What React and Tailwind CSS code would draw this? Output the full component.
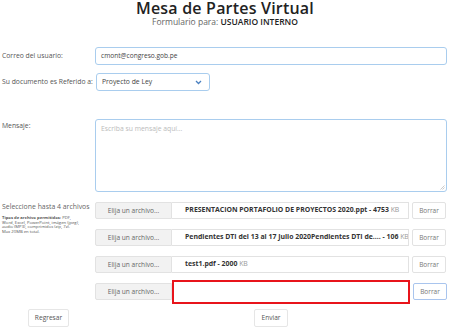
export default function App() {
  const archivos = [
    { nombre: "PRESENTACION PORTAFOLIO DE PROYECTOS 2020.ppt - 4753", kb: "KB" },
    { nombre: "Pendientes DTI del 13 al 17 Julio 2020Pendientes DTI de.... - 106", kb: "KB" },
    { nombre: "test1.pdf - 2000", kb: "KB" },
    { nombre: "", kb: "", vacio: true },
  ];

  return (
    <div
      className="w-[450px] h-[332px] bg-white text-[#555] relative overflow-hidden"
      style={{ fontFamily: "'Open Sans', 'Noto Sans', sans-serif" }}
    >
      {/* HEADER */}
      <div className="flex flex-col items-center">
        <h1 className="text-[16px] leading-[16px] tracking-[0.2px] font-semibold text-[#222]">Mesa de Partes Virtual</h1>
        <div className="text-[8.5px] leading-[11px] text-[#666]">
          Formulario para: <span className="font-semibold text-[#222]">USUARIO INTERNO</span>
        </div>
      </div>

      {/* CORREO */}
      <div className="flex items-center mt-[20px] h-[18px]">
        <div className="w-[95px] pl-[2px] text-[6.8px] text-[#555] whitespace-nowrap">Correo del usuario:</div>
        <div className="w-[352px] h-[18px] border border-[#a9cdee] rounded-[3px] flex items-center px-[5px] text-[6.6px] text-[#444]">
          cmont@congreso.gob.pe
        </div>
      </div>

      {/* REFERIDO */}
      <div className="flex items-center mt-[8px] h-[18px]">
        <div className="w-[96px] pl-[2px] text-[6.8px] text-[#555] whitespace-nowrap">Su documento es Referido a:</div>
        <div className="w-[114px] h-[18px] border border-[#a9cdee] rounded-[3px] flex items-center justify-between pl-[5px] pr-[7px] text-[6.8px] text-[#444]">
          <span>Proyecto de Ley</span>
          <svg width="7" height="5" viewBox="0 0 7 5">
            <path d="M1 1l2.5 2.5L6 1" stroke="#4a80c0" strokeWidth="1.3" fill="none" />
          </svg>
        </div>
      </div>

      {/* MENSAJE */}
      <div className="flex mt-[28px]">
        <div className="w-[95px] pl-[2px] pt-[2px] text-[6.8px] text-[#555]">Mensaje:</div>
        <div className="relative w-[352px] h-[73px] border border-[#a9cdee] rounded-[3px] px-[5px] py-[4px] text-[6.8px] text-[#bbb]">
          Escriba su mensaje aquí...
          <svg className="absolute right-[1px] bottom-[1px]" width="5" height="5" viewBox="0 0 5 5">
            <path d="M4.5 0.5L0.5 4.5M4.5 2.5L2.5 4.5" stroke="#aaa" strokeWidth="0.6" />
          </svg>
        </div>
      </div>

      {/* ARCHIVOS */}
      <div className="flex mt-[10px]">
        <div className="w-[95px] pl-[2px]">
          <div className="text-[6.9px] leading-[11px] text-[#666] mt-[-1px] whitespace-nowrap">Seleccione hasta 4 archivos</div>
          <div className="text-[4.2px] leading-[4.6px] text-[#555] mt-[4px] whitespace-nowrap">
            <span className="font-bold">Tipos de archivo permitidos:</span> PDF,<br />
            Word, Excel, PowerPoint, imágen (jpeg),<br />
            audio (MP3), comprimidos (zip, 7z).<br />
            Max 20MB en total.
          </div>
        </div>
        <div className="flex flex-col gap-[10px]">
          {archivos.map((a, i) => (
            <div key={i} className="flex items-center h-[17px]">
              <div className="w-[77px] h-[17px] bg-[#f2f2f2] border border-[#e2e2e2] rounded-l-[2px] flex items-center justify-center text-[6.6px] text-[#666] whitespace-nowrap">
                Elija un archivo...
              </div>
              {a.vacio ? (
                <div className="w-[238px] h-[24px] border-2 border-[#e8141b] flex-none"></div>
              ) : (
                <div className="w-[237px] h-[17px] border border-l-0 border-[#e2e2e2] flex items-center pl-[13px] text-[6.9px] font-bold text-[#333] whitespace-nowrap overflow-hidden">
                  {a.nombre}&nbsp;<span className="font-normal text-[#999]">{a.kb}</span>
                </div>
              )}
              <div
                className={
                  "ml-[3px] w-[34px] h-[17px] border rounded-[2px] flex items-center justify-center text-[6.5px] text-[#777] " +
                  (a.vacio ? "border-[#a9c5ee]" : "border-[#e2e2e2]")
                }
              >
                Borrar
              </div>
            </div>
          ))}
        </div>
      </div>

      {/* BOTONES */}
      <div className="flex mt-[9px]">
        <div className="ml-[28px] w-[41px] h-[18px] border border-[#e6e6e6] rounded-[2px] flex items-center justify-center text-[6.6px] text-[#555]">
          Regresar
        </div>
        <div className="ml-[185px] w-[34px] h-[18px] border border-[#e6e6e6] rounded-[2px] flex items-center justify-center text-[6.6px] text-[#555]">
          Enviar
        </div>
      </div>
    </div>
  );
}
